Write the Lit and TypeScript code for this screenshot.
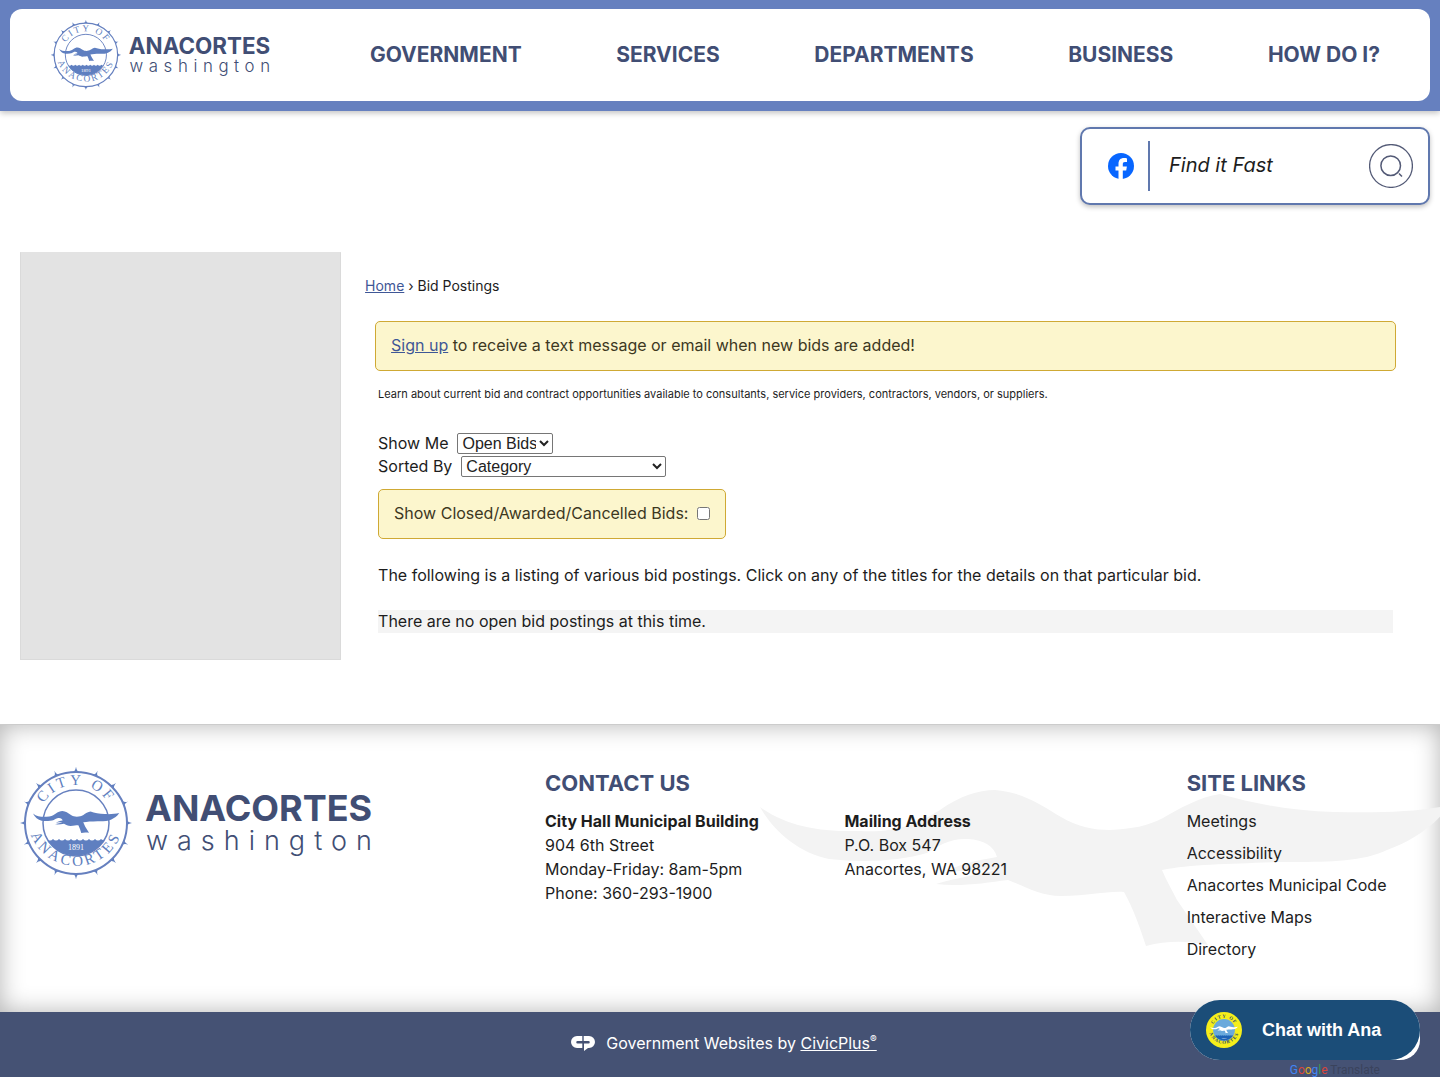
import { LitElement, html, css, svg } from "lit";
import { customElement, property } from "lit/decorators.js";

// Gull silhouette, drawn in a 690 x 156 box.
const GULL =
  "M0 17 C28 37 62 42 100 41 C135 43 158 34 180 20 C200 6 218 0 235 0 C262 2 280 14 301 27 C318 37 334 40 350 40 C372 39 388 36 403 28 C420 18 440 7 460 4 C492 13 530 21 574 22 C620 23 660 22 690 15 C674 37 650 52 627 60 C600 73 560 72 516 72 C470 74 430 74 402 80 C406 90 412 100 417 110 L448 155 C430 151 408 150 386 156 C380 138 374 120 364 102 C346 101 330 106 301 106 C280 106 262 95 248 90 C225 93 200 97 176 94 C196 88 222 84 236 80 C214 80 196 80 183 84 C196 74 220 70 237 67 C234 56 224 50 208 49 C190 48 178 56 167 63 C140 71 104 73 69 69 C40 63 14 42 0 17 Z";

const SPIKES = Array.from({ length: 16 }, (_, i) => i * 22.5);

@customElement("city-seal")
export class CitySeal extends LitElement {
  @property({ type: Boolean }) bright = false;

  static styles = css`
    :host { display: block; aspect-ratio: 1; }
    svg { display: block; width: 100%; height: 100%; overflow: visible; }
    .ink { fill: #5f7fc0; }
    .line { fill: none; stroke: #6680bf; stroke-width: 2; }
    .thin { stroke-width: 1.5; }
    .rim { font: 15px "Liberation Serif", serif; fill: #5f7fc0; letter-spacing: 3px; }
    .year { font: 8px "Liberation Serif", serif; fill: #fff; }
    .bright { fill: #f5ee1b; }
    .sky { fill: #6aa9dc; }
    .sea { fill: #1d62b5; }
    .pale { fill: #fff; }
    .dark { fill: #27456b; font-weight: bold; }
  `;

  render() {
    const b = this.bright;
    return html`<svg viewBox="0 0 112 112" role="img" aria-label="City of Anacortes seal">
      <defs>
        <path id="top" d="M18 56 A38 38 0 0 1 94 56"></path>
        <path id="bottom" d="M8.500 44 A48 48 0 1 0 103.500 44"></path>
      </defs>
      ${b
        ? svg`<circle class="bright" cx="56" cy="56" r="56"/><circle class="sky" cx="56" cy="56" r="34"/>`
        : svg`${SPIKES.map(
            (a) => svg`<path class="ink" transform="rotate(${a} 56 56)" d="M53 5 Q55.500 4 56 -0.500 Q56.500 4 59 5 Z"/>`
          )}<circle class="line" cx="56" cy="56" r="51"/><circle class="line thin" cx="56" cy="56" r="33"/>`}
      <path class=${b ? "sea" : "ink"}
        d="M27 72 q3 3 6 0 q3 3 6 0 q3 3 6 0 q3 3 6 0 q3 3 6 0 q3 3 6 0 q3 3 6 0 q3 3 6 0 q3 3 6 0 q2 2 4 0 A33.500 33.500 0 0 1 27 72 Z"></path>
      <path class=${b ? "pale" : "ink"} transform="translate(13 44) scale(0.125 0.141)" d=${GULL}></path>
      <text class="year" x="56" y="83" text-anchor="middle">1891</text>
      <text class=${b ? "rim dark" : "rim"}><textPath href="#top" startOffset="50%" text-anchor="middle">CITY OF</textPath></text>
      <text class=${b ? "rim dark" : "rim"}><textPath href="#bottom" startOffset="50%" text-anchor="middle">ANACORTES</textPath></text>
    </svg>`;
  }
}

@customElement("city-logo")
export class CityLogo extends LitElement {
  static styles = css`
    :host { display: block; }
    svg { display: block; width: 100%; overflow: visible; }
    .name { font: 700 36px Inter, sans-serif; fill: #414e74; }
    .state { font: 300 27px Inter, sans-serif; fill: #414e74; letter-spacing: 9px; }
  `;

  render() {
    return html`<svg viewBox="0 0 350 112" role="img" aria-label="Anacortes, Washington">
      <foreignObject width="112" height="112"><city-seal></city-seal></foreignObject>
      <text class="name" x="125" y="54">ANACORTES</text>
      <text class="state" x="126" y="83">washington</text>
    </svg>`;
  }
}

@customElement("app-root")
export class AppRoot extends LitElement {
  static styles = css`
    :host {
      display: block;
      font: 16px/24px Inter, sans-serif;
      color: #1d1d1d;
      background: #fff;
    }
    * { box-sizing: border-box; }
    h2, p, ul { margin: 0; padding: 0; }
    ul { list-style: none; }
    a { color: inherit; text-decoration: none; }
    .link { color: #3f5796; text-decoration: underline; }

    header { background: #6680bf; padding: 9px 10px 10px; box-shadow: 0 2px 6px rgba(0, 0, 0, 0.25); }
    .bar {
      display: flex;
      align-items: center;
      min-height: 92px;
      padding: 0 50px 0 41px;
      background: #fff;
      border-radius: 12px;
    }
    .brand { flex: none; width: 218px; margin-right: 101px; }
    nav { flex: 1; display: flex; justify-content: space-between; gap: 16px; }
    nav a, h2 { font-size: 22px; line-height: 32px; font-weight: 700; color: #414e74; }
    nav a { font-size: 21px; }

    .tools { display: flex; justify-content: flex-end; padding: 16px 10px 0; }
    .search {
      display: flex;
      align-items: center;
      width: 350px;
      height: 78px;
      padding: 0 15px 0 26px;
      border: 2px solid #6078ae;
      border-radius: 10px;
      background: #fff;
      box-shadow: 0 2px 5px rgba(0, 0, 0, 0.25);
    }
    .fb { display: block; width: 26px; height: 26px; margin-right: 14px; }
    .fb svg, .go svg { display: block; width: 100%; height: 100%; }
    .search input {
      flex: 1;
      min-width: 0;
      height: 50px;
      padding: 0 0 2px 19px;
      border: 0;
      border-left: 2px solid #6078ae;
      background: none;
      font: italic 20px Inter, sans-serif;
      color: #1d1d1d;
      outline: none;
    }
    .search input::placeholder { color: #1d1d1d; opacity: 1; }
    .go { width: 44px; height: 44px; padding: 0; border: 0; background: none; }

    main {
      display: grid;
      grid-template-columns: 7fr 23fr;
      gap: 24px;
      padding: 47px 20px 64px;
    }
    aside { background: #e3e3e3; border: 1px solid #dadada; border-top-color: #e3e3e3; }
    .content { min-height: 408px; padding: 22px 24px 27px 10px; }
    .crumbs { margin: 0 0 23px -10px; font-size: 14px; }
    .note {
      padding: 11px 15px 13px;
      border: 1px solid #cfa934;
      border-radius: 5px;
      background: #fcf6cd;
      color: #3d381f;
    }
    .body { padding: 11px 3px 0; }
    .intro { font-size: 11px; margin-bottom: 26px; }
    .field { display: flex; align-items: center; gap: 9px; line-height: 23px; }
    select {
      height: 21px;
      font: 16px "Liberation Sans", Arial, sans-serif;
      color: #222;
      background: #fff;
      border: 1px solid #767676;
      border-radius: 2px;
      padding: 0;
    }
    .show { width: 96px; }
    .sort { width: 205px; }
    .closed { display: flex; width: fit-content; align-items: center; gap: 9px; margin-top: 11px; }
    .closed input { width: 13px; height: 13px; margin: 0; }
    .listing { margin: 24px 0 23px; }
    .empty { background: #f4f4f4; line-height: 23px; }

    footer { position: relative; }
    .info {
      position: relative;
      isolation: isolate;
      display: grid;
      grid-template-columns: 45fr 55fr 20fr;
      min-height: 288px;
      padding: 42px 20px 51px;
      overflow: hidden;
      border-top: 1px solid #ccc;
      box-shadow: inset 0 0 24px rgba(0, 0, 0, 0.3);
    }
    .mark { position: absolute; right: -10px; top: 65px; width: 690px; fill: #f3f3f3; z-index: -1; }
    .info city-logo { width: 350px; }
    .info h2 { margin-bottom: 10px; }
    .cols { display: grid; grid-template-columns: 7fr 8fr; }
    .links { display: grid; gap: 8px; white-space: nowrap; }
    .credit {
      display: flex;
      align-items: center;
      justify-content: center;
      gap: 11px;
      min-height: 65px;
      padding: 0 0 3px 8px;
      background: #455274;
      color: #fff;
    }
    .credit svg { width: 24px; height: 16px; }
    .credit a { text-decoration: underline; }
    .credit sup { font-size: 10px; line-height: 1; }

    .chat { position: absolute; right: 20px; bottom: 17px; background: #fff; border-radius: 30px 30px 20px 30px; }
    .chat button {
      display: flex;
      align-items: center;
      gap: 20px;
      width: 230px;
      height: 60px;
      padding: 0 16px;
      border: 0;
      border-radius: 30px;
      background: #1b4d78;
      color: #fff;
      font: bold 18px "Liberation Sans", Arial, sans-serif;
    }
    .chat city-seal { width: 36px; }
    .translate {
      position: absolute;
      right: 60px;
      bottom: 0;
      font: 12px/13px Roboto, sans-serif;
      color: #3a435c;
    }
    .g1 { color: #4285f4; } .g2 { color: #d8453b; } .g3 { color: #d9a521; } .g4 { color: #3a9b56; }
  `;

  render() {
    return html`
      <header>
        <div class="bar">
          <a class="brand" href="#" aria-label="Anacortes home"><city-logo></city-logo></a>
          <nav>
            ${["GOVERNMENT", "SERVICES", "DEPARTMENTS", "BUSINESS", "HOW DO I?"].map((t) => html`<a href="#">${t}</a>`)}
          </nav>
        </div>
      </header>
      <div class="tools">
        <form class="search" role="search">
          <a class="fb" href="#" aria-label="Facebook">
            <svg viewBox="0 0 26 26"><circle cx="13" cy="13" r="13" fill="#0866ff"/><path fill="#fff" d="M10.500 26 V17.500 H7.500 V13.500 H10.500 V11 C10.500 7 12.500 5 16 5 C17.200 5 18.300 5.200 19 5.400 V9 H17 C15.400 9 14.800 9.800 14.800 11.200 V13.500 H18.900 L18.200 17.500 H14.800 V26 Z"/></svg>
          </a>
          <input type="search" placeholder="Find it Fast" aria-label="Find it Fast" />
          <button class="go" type="button" aria-label="Search">
            <svg viewBox="0 0 44 44" fill="none" stroke="#535a76"><circle cx="22" cy="22" r="21.400" stroke-width="1.300"/><circle cx="21.700" cy="21.700" r="9.800" stroke-width="1.500"/><path stroke-width="1.500" d="M30 29.500 L33 32.500"/></svg>
          </button>
        </form>
      </div>
      <main>
        <aside></aside>
        <section class="content">
          <p class="crumbs"><a class="link" href="#">Home</a> › Bid Postings</p>
          <p class="note"><a class="link" href="#">Sign up</a> to receive a text message or email when new bids are added!</p>
          <div class="body">
            <p class="intro">Learn about current bid and contract opportunities available to consultants, service providers, contractors, vendors, or suppliers.</p>
            <div class="field"><label for="show">Show Me</label><select id="show" class="show"><option>Open Bids</option></select></div>
            <div class="field"><label for="sort">Sorted By</label><select id="sort" class="sort"><option>Category</option></select></div>
            <label class="note closed">Show Closed/Awarded/Cancelled Bids: <input type="checkbox" /></label>
            <p class="listing">The following is a listing of various bid postings. Click on any of the titles for the details on that particular bid.</p>
            <p class="empty">There are no open bid postings at this time.</p>
          </div>
        </section>
      </main>
      <footer>
        <div class="info">
          <svg class="mark" viewBox="0 0 690 156" aria-hidden="true"><path d=${GULL}></path></svg>
          <city-logo></city-logo>
          <section>
            <h2>CONTACT US</h2>
            <div class="cols">
              <p><strong>City Hall Municipal Building</strong><br />904 6th Street<br />Monday-Friday: 8am-5pm<br />Phone: 360-293-1900</p>
              <p><strong>Mailing Address</strong><br />P.O. Box 547<br />Anacortes, WA 98221</p>
            </div>
          </section>
          <section>
            <h2>SITE LINKS</h2>
            <ul class="links">
              ${["Meetings", "Accessibility", "Anacortes Municipal Code", "Interactive Maps", "Directory"].map((t) => html`<li><a href="#">${t}</a></li>`)}
            </ul>
          </section>
        </div>
        <div class="credit">
          <svg viewBox="0 0 24 16" aria-hidden="true"><path fill="#fff" d="M11.300 1 V6 H6.500 A1 1 0 0 0 6.500 8.500 H11.300 V13 H6 A6 6 0 0 1 6 1 Z M12.700 1 H18 A6 6 0 0 1 18 13 H17 L13 16 V8.500 H17.500 A1 1 0 0 0 17.500 6 H12.700 Z"/></svg>
          <span>Government Websites by <a href="#">CivicPlus<sup>®</sup></a></span>
        </div>
        <span class="translate"><span class="g1">G</span><span class="g2">o</span><span class="g3">o</span><span class="g1">g</span><span class="g4">l</span><span class="g2">e</span> Translate</span>
        <div class="chat"><button type="button"><city-seal bright></city-seal>Chat with Ana</button></div>
      </footer>
    `;
  }
}
